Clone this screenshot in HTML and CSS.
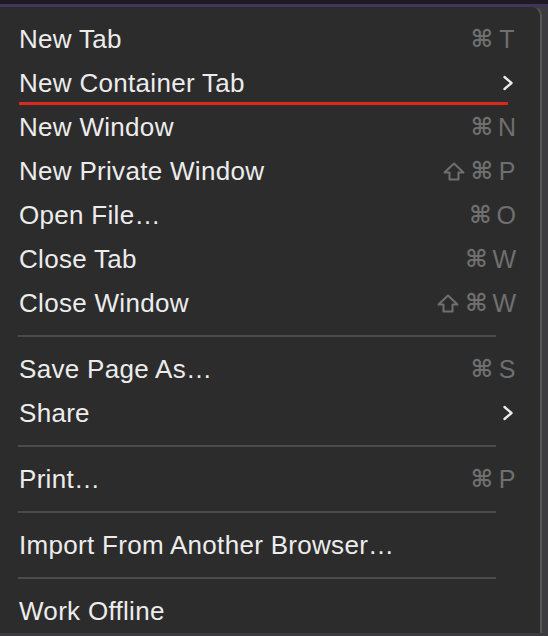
FILE: index.html
```html
<!DOCTYPE html>
<html>
<head>
<meta charset="utf-8">
<link rel="stylesheet" href="styles.css">
</head>
<body>
<div class="screen">
  <div class="menu">
    <div class="item"><span class="label">New Tab</span><span class="keys"><span class="cmd">⌘</span><span class="k">T</span></span></div>
    <div class="item marked"><span class="label">New Container Tab</span><span class="chev"><svg width="12" height="16" viewBox="0 0 12 16"><path d="M2.5 2 L9.5 8 L2.5 14" fill="none" stroke="#ececec" stroke-width="2.4" stroke-linecap="round" stroke-linejoin="round"/></svg></span></div>
    <div class="item"><span class="label">New Window</span><span class="keys"><span class="cmd">⌘</span><span class="k">N</span></span></div>
    <div class="item"><span class="label">New Private Window</span><span class="keys"><svg class="shift" width="22" height="19" viewBox="0 0 22 19"><path d="M11 1.5 L20.5 10.5 L15.5 10.5 L15.5 17.5 L6.5 17.5 L6.5 10.5 L1.5 10.5 Z" fill="none" stroke="#6f6f6f" stroke-width="2" stroke-linejoin="round"/></svg><span class="cmd">⌘</span><span class="k">P</span></span></div>
    <div class="item"><span class="label">Open File…</span><span class="keys"><span class="cmd">⌘</span><span class="k">O</span></span></div>
    <div class="item"><span class="label">Close Tab</span><span class="keys"><span class="cmd">⌘</span><span class="k">W</span></span></div>
    <div class="item"><span class="label">Close Window</span><span class="keys"><svg class="shift" width="22" height="19" viewBox="0 0 22 19"><path d="M11 1.5 L20.5 10.5 L15.5 10.5 L15.5 17.5 L6.5 17.5 L6.5 10.5 L1.5 10.5 Z" fill="none" stroke="#6f6f6f" stroke-width="2" stroke-linejoin="round"/></svg><span class="cmd">⌘</span><span class="k">W</span></span></div>
    <div class="sep"></div>
    <div class="item"><span class="label">Save Page As…</span><span class="keys"><span class="cmd">⌘</span><span class="k">S</span></span></div>
    <div class="item"><span class="label">Share</span><span class="chev"><svg width="12" height="16" viewBox="0 0 12 16"><path d="M2.5 2 L9.5 8 L2.5 14" fill="none" stroke="#ececec" stroke-width="2.4" stroke-linecap="round" stroke-linejoin="round"/></svg></span></div>
    <div class="sep"></div>
    <div class="item"><span class="label">Print…</span><span class="keys"><span class="cmd">⌘</span><span class="k">P</span></span></div>
    <div class="sep"></div>
    <div class="item"><span class="label">Import From Another Browser…</span></div>
    <div class="sep"></div>
    <div class="item"><span class="label">Work Offline</span></div>
  </div>
</div>
</body>
</html>
```
FILE: styles.css
```css
html, body {
  margin: 0;
  padding: 0;
  background: #1d1a22;
}
.screen {
  width: 548px;
  height: 636px;
  overflow: hidden;
  background: linear-gradient(to bottom, #1d1a22 0, #1d1a22 4px, #4a2f63 4px, #4a2f63 6px, #3b3b40 6px);
  padding-top: 6px;
  box-sizing: border-box;
}
.menu {
  width: 542px;
  box-sizing: border-box;
  background: #2c2c2c;
  border-top-right-radius: 10px;
  border-right: 2px solid #565656;
  border-top: 1px solid #3d3a52;
  padding: 10px 0 0 0;
  font-family: "Liberation Sans", Arial, sans-serif;
  font-size: 26px;
  color: #ececec;
}
.item {
  position: relative;
  height: 44px;
  display: flex;
  align-items: center;
  justify-content: space-between;
  padding: 0 24px 0 19px;
}
.label {
  letter-spacing: 0.3px;
}
.keys {
  display: flex;
  align-items: center;
  color: #6f6f6f;
  gap: 5px;
  font-size: 25px;
}
.cmd {
  font-family: "DejaVu Sans", sans-serif;
  font-size: 24px;
  font-weight: bold;
}
.shift {
  display: block;
  margin-right: 1px;
}
.k {
  min-width: 18px;
  text-align: center;
}
.chev {
  display: flex;
  align-items: center;
  padding-right: 2px;
}
.marked::after {
  content: "";
  position: absolute;
  left: 19px;
  width: 489px;
  top: 41px;
  height: 3px;
  background: #d9281c;
}
.sep {
  height: 22px;
  display: flex;
  align-items: center;
  padding: 0 44px 0 18px;
}
.sep::before {
  content: "";
  flex: 1;
  height: 2px;
  background: #4b4b4b;
}
```
